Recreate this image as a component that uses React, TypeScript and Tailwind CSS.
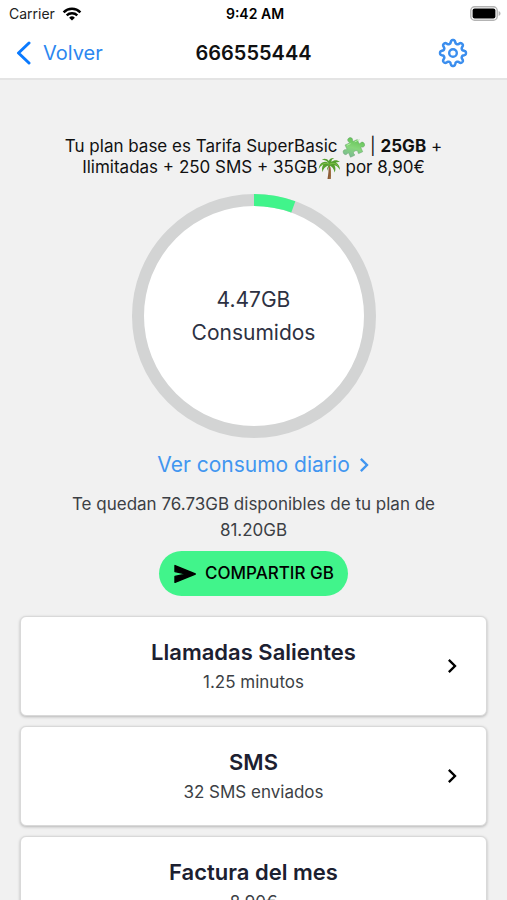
import type { ReactNode } from 'react';
import { MdChevronRight } from 'react-icons/md';

const USED_GB = 4.47;
const TOTAL_GB = 81.2;

function WifiIcon() {
  return (
    <svg viewBox="0 0 20 14" className="h-[14px] w-5" fill="none" stroke="#000" aria-hidden="true">
      <path d="M1.6 5.3a12 12 0 0 1 16.8 0" strokeWidth="2.5" />
      <path d="M4.7 8.4a7.6 7.6 0 0 1 10.6 0" strokeWidth="2.4" />
      <path d="M10 13.6 7.1 10.7a4.2 4.2 0 0 1 5.8 0z" fill="#000" stroke="none" />
    </svg>
  );
}

function BatteryIcon() {
  return (
    <svg viewBox="0 0 31 15" className="h-[15px] w-[31px]" aria-hidden="true">
      <rect x="0.8" y="0.8" width="26.4" height="13.4" rx="3.8" fill="#fff" stroke="#b3b3b3" strokeWidth="1.4" />
      <rect x="2.6" y="2.6" width="22.8" height="9.8" rx="2" fill="#000" />
      <path d="M28.6 5v5c1.2-.5 1.9-1.4 1.9-2.5S29.8 5.5 28.6 5z" fill="#b3b3b3" />
    </svg>
  );
}

const gearOutline = Array.from({ length: 160 }, (_, i) => {
  const angle = (i / 160) * 2 * Math.PI;
  const wave = Math.cos(8 * angle);
  const r = 11.3 + 1.8 * Math.tanh(1.6 * wave);
  return `${(15 + r * Math.sin(angle)).toFixed(2)},${(15 - r * Math.cos(angle)).toFixed(2)}`;
}).join(' ');

function GearIcon() {
  return (
    <svg viewBox="0 0 30 30" className="h-[30px] w-[30px]" fill="none" stroke="currentColor" strokeLinejoin="round" aria-hidden="true">
      <polygon points={gearOutline} strokeWidth="2.5" />
      <circle cx="15" cy="15" r="3.8" strokeWidth="2.4" />
    </svg>
  );
}

function SendIcon() {
  return (
    <svg viewBox="0 0 24 24" className="h-6 w-6" fill="currentColor" stroke="currentColor" strokeWidth="1.4" strokeLinejoin="round" aria-hidden="true">
      <path d="M2 3.6v6L13.5 12 2 14.4v6L22.3 12z" />
    </svg>
  );
}

function PuzzleIcon() {
  return (
    <svg viewBox="0 0 24 24" className="-my-1 inline-block h-[23px] w-[23px] align-middle" role="img" aria-label="puzzle">
      <defs>
        <linearGradient id="puzzle" x1="0" y1="1" x2="1" y2="0">
          <stop offset="0" stopColor="#78b39a" />
          <stop offset="0.45" stopColor="#86d67a" />
          <stop offset="1" stopColor="#4fb83e" />
        </linearGradient>
      </defs>
      <g transform="rotate(-24 12 12)" fill="url(#puzzle)" stroke="#5b9a62" strokeWidth="0.4">
        <path d="M5 6h4.3c.7 0 .9-.6.5-1.2C8.7 3 9.800 1 12 1s3.300 2 2.200 3.800c-.4.600-.2 1.200.5 1.200H19v4.300c0 .7.600.9 1.200.5C22 9.700 24 10.800 24 13s-2 3.300-3.800 2.200c-.6-.4-1.200-.2-1.200.5V20h-4.300c-.7 0-.9-.5-.6-1.100.9-1.700-.3-3-2.100-3s-3 1.300-2.100 3c.3.600.1 1.100-.6 1.100H5v-4.300c0-.7-.6-.9-1.200-.5C2 16.300 0 15.200 0 13s2-3.300 3.800-2.200c.6.4 1.200.2 1.200-.5z" />
      </g>
      <path d="M5.5 9.5l3-1.4M13.5 6l4.5-2" stroke="#b4eda8" strokeWidth="1" strokeLinecap="round" />
    </svg>
  );
}

function PalmIcon() {
  return (
    <svg viewBox="0 0 24 24" className="-my-1 inline-block h-[23px] w-[23px] align-middle" role="img" aria-label="palm tree">
      <path d="M12 8c1.600 4 2 9 1.300 15h-3.400c.9-5 1.500-10 .9-14.500z" fill="#8a5a35" />
      <path d="M11.900 9c1.200 4 1.300 9 .5 14" stroke="#a87848" strokeWidth="0.8" fill="none" />
      <path
        d="M12 7.500C10.500 5 7.500 4.200 4.500 5.800 2.300 7 1 9.500.8 12.500c1.600-2.700 3-3.800 4.600-4.300C4 10.500 3.800 13 4.800 15.800c.5-3.500 2.500-6 6.500-7.300-1.700 2-2.100 3.600-1.700 5.800.6-2.300 1.500-4 2.900-5.300 2.300 1 4 3.200 4.900 7.200 1.200-3 1-5.500-.3-7.600 2.400.6 4.200 2.100 5.900 4.900-.2-3.500-1.600-6.300-4.500-7.700C21 5.500 22 5 23 5c-3-2.200-6.500-2.200-9 .3C13.900 3 15 1.800 17 1c-3-.4-5 .9-5.700 3.200C9.500 1.500 6.500 1 4 2.700c3 .3 6 1.800 8 4.800z"
        fill="#55a02f"
      />
      <path d="M12 7.500C9 6 6 6.200 3 9M12.500 7.500c3-1.500 6-1 8.500 2" stroke="#86c84c" strokeWidth="0.9" fill="none" />
    </svg>
  );
}

function UsageRing({ children }: { children: ReactNode }) {
  const radius = 116;
  const length = 2 * Math.PI * radius;
  return (
    <div className="grid place-items-center">
      <svg viewBox="0 0 244 244" className="col-start-1 row-start-1 h-[244px] w-[244px]" aria-hidden="true">
        <circle cx="122" cy="122" r={radius} fill="#fff" stroke="#d3d4d4" strokeWidth="12" />
        <circle
          cx="122"
          cy="122"
          r={radius}
          fill="none"
          stroke="#41f48b"
          strokeWidth="12"
          strokeDasharray={`${(length * USED_GB) / TOTAL_GB} ${length}`}
          transform="rotate(-90 122 122)"
        />
      </svg>
      <div className="col-start-1 row-start-1 text-center text-[21px] leading-[33px] text-[#2d3142]">{children}</div>
    </div>
  );
}

function Card({ title, detail, chevron = true }: { title: string; detail: string; chevron?: boolean }) {
  return (
    <button
      type="button"
      className="grid h-[100px] w-full shrink-0 grid-cols-[1fr_auto_1fr] items-center rounded-md border border-[#d9d9d9] bg-white px-5 text-center shadow-[0_1px_3px_rgba(0,0,0,0.25)]"
    >
      <span className="col-start-2 flex flex-col">
        <span className="text-[22px] font-semibold leading-8 text-[#1c2030]">{title}</span>
        <span className="text-[17px] leading-7 text-[#3c3f45]">{detail}</span>
      </span>
      {chevron && <MdChevronRight size={28} className="justify-self-end text-black" aria-hidden="true" />}
    </button>
  );
}

export default function App() {
  return (
    <div className="flex h-screen flex-col overflow-hidden bg-[#f1f1f1] font-['Inter','Liberation_Sans',sans-serif]">
      <header className="shrink-0 border-b-2 border-[#e4e4e4] bg-white">
        <div className="grid h-[27px] grid-cols-3 items-center pl-[9px] pr-[6px] text-sm text-[#222]">
          <span className="flex items-center gap-[7px]">
            Carrier
            <WifiIcon />
          </span>
          <span className="text-center font-semibold text-black">9:42 AM</span>
          <span className="flex justify-end">
            <BatteryIcon />
          </span>
        </div>
        <div className="grid h-[51px] grid-cols-[1fr_auto_1fr] items-center pl-4 pr-[39px]">
          <a href="#volver" className="flex items-center gap-3 text-xl text-[#2c87f0]">
            <svg viewBox="0 0 15 24" className="h-6 w-[15px]" fill="none" stroke="#0a7aff" strokeWidth="3" strokeLinecap="round" strokeLinejoin="round" aria-hidden="true">
              <path d="M13 2 2.5 12 13 22" />
            </svg>
            Volver
          </a>
          <h1 className="pl-[23px] text-center text-xl font-semibold text-[#111]">666555444</h1>
          <button type="button" aria-label="Ajustes" className="justify-self-end text-[#3b8eee]">
            <GearIcon />
          </button>
        </div>
      </header>

      <main className="flex flex-1 flex-col items-center overflow-y-auto px-5 pt-14 [scrollbar-width:none]">
        <p className="w-[390px] max-w-full shrink-0 text-center text-[17px] leading-[21px] text-[#111]">
          Tu plan base es Tarifa SuperBasic <PuzzleIcon /> | <strong className="font-bold">25GB</strong> + Ilimitadas + 250 SMS + 35GB
          <PalmIcon /> por 8,90€
        </p>

        <div className="mt-4 shrink-0">
          <UsageRing>
            <p>4.47GB</p>
            <p>Consumidos</p>
          </UsageRing>
        </div>

        <a href="#consumo" className="mt-3 grid shrink-0 grid-cols-[1fr_auto_1fr] items-center text-[21px] leading-[30px] text-[#4196f0]">
          <span className="col-start-2">Ver consumo diario</span>
          <MdChevronRight size={28} aria-hidden="true" />
        </a>

        <p className="mt-[11px] w-[390px] max-w-full shrink-0 text-center text-[17px] leading-[26px] text-[#3c3f45]">
          Te quedan 76.73GB disponibles de tu plan de 81.20GB
        </p>

        <button
          type="button"
          className="mt-2 flex h-[45px] shrink-0 items-center gap-2 rounded-full bg-[#41f48b] px-[14px] text-[17px] font-medium text-black"
        >
          <SendIcon />
          COMPARTIR GB
        </button>

        <div className="mt-5 flex w-full flex-col gap-[10px]">
          <Card title="Llamadas Salientes" detail="1.25 minutos" />
          <Card title="SMS" detail="32 SMS enviados" />
          <Card title="Factura del mes" detail="8,90€" chevron={false} />
        </div>
      </main>
    </div>
  );
}
